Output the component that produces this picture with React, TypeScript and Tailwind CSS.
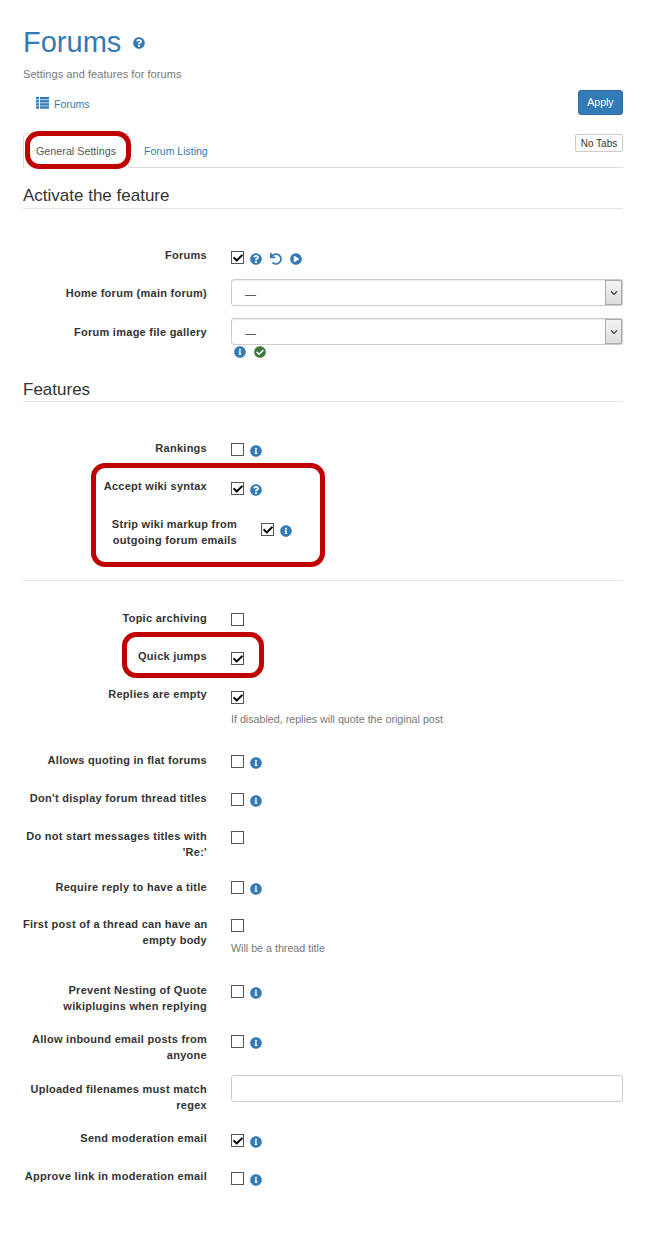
import React from "react";
import { FaQuestionCircle, FaInfoCircle, FaUndo, FaPlayCircle, FaCheckCircle, FaCheck, FaChevronDown } from "react-icons/fa";

function Box({ on, cls = "" }: { on?: boolean; cls?: string }) {
  return (
    <span className={"flex h-[13px] w-[13px] shrink-0 items-center justify-center border border-[#555] bg-white text-black " + cls}>
      {on ? <FaCheck size={10} /> : null}
    </span>
  );
}
const Q = () => <FaQuestionCircle size={12} className="text-[#337ab7]" />;
const I = () => <FaInfoCircle size={12} className="text-[#337ab7]" />;

const labelCls = "shrink-0 whitespace-nowrap pt-[6px] text-right text-[11px] leading-4 font-bold tracking-[0.27px] text-[#333] ";

function Row({ label, on, icon, h, help, lw = "w-[184px]", box = "pt-[9px]", helpCls = "mt-[8px]" }: { label: React.ReactNode; on?: boolean; icon?: React.ReactNode; h: string; help?: string; lw?: string; box?: string; helpCls?: string }) {
  return (
    <div className={"flex items-start " + h}>
      <label className={labelCls + lw}>{label}</label>
      <div className="ml-[24px]">
        <div className={"flex items-start gap-[6px] " + box}>
          <Box on={on} />
          {icon ? <span className="mt-[2px] flex">{icon}</span> : null}
        </div>
        {help ? <p className={"text-[10.7px] leading-4 text-[#777] " + helpCls}>{help}</p> : null}
      </div>
    </div>
  );
}

function Select() {
  return (
    <div className="flex h-[27px] w-[392px] items-stretch rounded-[3px] border border-[#ccc] bg-white shadow-[inset_0_1px_1px_rgba(0,0,0,0.08)]">
      <span className="flex-1 pl-[13px] text-[11px] leading-[28px] text-[#333]">—</span>
      <span className="flex w-[17px] items-center justify-center border border-[#aaa] bg-gradient-to-b from-[#f4f4f4] to-[#dcdcdc] text-[#444]">
        <FaChevronDown size={8} />
      </span>
    </div>
  );
}

function Heading({ children, cls }: { children: React.ReactNode; cls: string }) {
  return <h2 className={"border-b border-[#e5e5e5] text-[17px] leading-[22px] font-normal text-[#333] " + cls}>{children}</h2>;
}

function Mark({ cls }: { cls: string }) {
  return <div className={"pointer-events-none absolute rounded-[14px] border-[5px] border-[#c00000] " + cls} />;
}

export default function App() {
  return (
    <div className="relative h-[1234px] w-[653px] bg-white pl-[23px] pr-[30px] pt-[21px] font-['Liberation_Sans',Arial,sans-serif]">
      <h1 className="flex h-[42px] items-center text-[29px] leading-[42px] font-normal text-[#337ab7]">
        Forums
        <FaQuestionCircle size={12} className="ml-[12px] mt-[2px]" />
      </h1>
      <p className="mt-[3px] text-[11px] leading-4 tracking-[0.06px] text-[#777]">Settings and features for forums</p>

      <div className="mt-[8px] flex items-start justify-between">
        <a className="ml-[13px] mt-[6px] flex items-center text-[10.5px] leading-4 text-[#337ab7]">
          <svg width="13" height="12" viewBox="0 0 13 12" className="mr-[5px] -mt-[2px]" fill="currentColor">
            <rect x="0" y="0" width="3" height="2.4" />
            <rect x="4" y="0" width="9" height="2.4" />
            <rect x="0" y="3.1" width="3" height="2.4" />
            <rect x="4" y="3.1" width="9" height="2.4" />
            <rect x="0" y="6.2" width="3" height="2.4" />
            <rect x="4" y="6.2" width="9" height="2.4" />
            <rect x="0" y="9.3" width="3" height="2.4" />
            <rect x="4" y="9.3" width="9" height="2.4" />
          </svg>
          Forums
        </a>
        <button className="h-[25px] w-[45px] rounded-[3px] border border-[#2e6da4] bg-[#337ab7] text-[10.5px] text-white">Apply</button>
      </div>

      <div className="relative mt-[18px] flex h-[35px] items-start border-b border-[#ddd]">
        <div className="flex h-[35px] items-center rounded-t-[4px] border border-b-white border-[#ddd] px-[12px] pt-[2px] text-[10.75px] text-[#555]">General Settings</div>
        <a className="ml-[15px] flex h-[35px] items-center pt-[2px] text-[10.5px] text-[#337ab7]">Forum Listing</a>
        <button className="absolute right-0 top-[1px] h-[18px] w-[48px] rounded-[2px] border border-[#ccc] bg-white pt-[1px] text-[10px] leading-none text-[#333]">No Tabs</button>
      </div>

      <Heading cls="mt-[17px] pb-[1px]">Activate the feature</Heading>

      <div className="mt-[32px]">
        <Row
          label="Forums"
          on
          h="h-[38px]"
          box="pt-[10px]"
          icon={
            <span className="flex items-center gap-[8px]">
              <Q />
              <FaUndo size={12} className="text-[#337ab7]" />
              <FaPlayCircle size={12} className="text-[#337ab7]" />
            </span>
          }
        />
        <div className="flex h-[39px] items-start">
          <label className={labelCls + "w-[184px]"}>Home forum (main forum)</label>
          <div className="ml-[24px]"><Select /></div>
        </div>
        <div className="flex items-start">
          <label className={labelCls + "w-[184px]"}>Forum image file gallery</label>
          <div className="ml-[24px]">
            <Select />
            <div className="mt-[1px] ml-[3px] flex gap-[8px]">
              <I />
              <FaCheckCircle size={12} className="text-[#3c763d]" />
            </div>
          </div>
        </div>
      </div>

      <Heading cls="mt-[21px]">Features</Heading>

      <div className="mt-[32px]">
        <Row label="Rankings" h="h-[38px]" icon={<I />} />
        <Row label="Accept wiki syntax" on h="h-[38px]" box="pt-[10px]" icon={<Q />} />
        <Row label={<>Strip wiki markup from<br />outgoing forum emails</>} lw="w-[214px]" on h="h-[70px]" box="pt-[13px]" icon={<I />} />
      </div>

      <div className="border-b border-[#e5e5e5]" />

      <div className="mt-[23px]">
        <Row label="Topic archiving" h="h-[38px]" />
        <Row label="Quick jumps" on h="h-[38px]" box="pt-[10px]" />
        <Row label="Replies are empty" on h="h-[66px]" box="pt-[11px]" helpCls="mt-[7px]" help="If disabled, replies will quote the original post" />
        <Row label="Allows quoting in flat forums" h="h-[38px]" icon={<I />} />
        <Row label="Don't display forum thread titles" h="h-[38px]" icon={<I />} />
        <Row label={<>Do not start messages titles with<br />'Re:'</>} h="h-[51px]" />
        <Row label="Require reply to have a title" h="h-[37px]" box="pt-[8px]" icon={<I />} />
        <Row label={<>First post of a thread can have an<br />empty body</>} h="h-[66px]" help="Will be a thread title" />
        <Row label={<>Prevent Nesting of Quote<br />wikiplugins when replying</>} h="h-[49px]" icon={<I />} />
        <Row label={<>Allow inbound email posts from<br />anyone</>} h="h-[50px]" box="pt-[10px]" icon={<I />} />
        <div className="flex h-[49px] items-start">
          <label className={labelCls + "w-[184px]"}>Uploaded filenames must match<br />regex</label>
          <div className="ml-[24px]">
            <div className="h-[27px] w-[392px] rounded-[3px] border border-[#ccc] bg-white" />
          </div>
        </div>
        <Row label="Send moderation email" on h="h-[38px]" box="pt-[10px]" icon={<I />} />
        <Row label="Approve link in moderation email" h="h-[38px]" box="pt-[10px]" icon={<I />} />
      </div>

      <Mark cls="left-[25px] top-[131px] h-[38px] w-[106px]" />
      <Mark cls="left-[91px] top-[463px] h-[104px] w-[234px]" />
      <Mark cls="left-[122px] top-[632px] h-[46px] w-[142px]" />
    </div>
  );
}
